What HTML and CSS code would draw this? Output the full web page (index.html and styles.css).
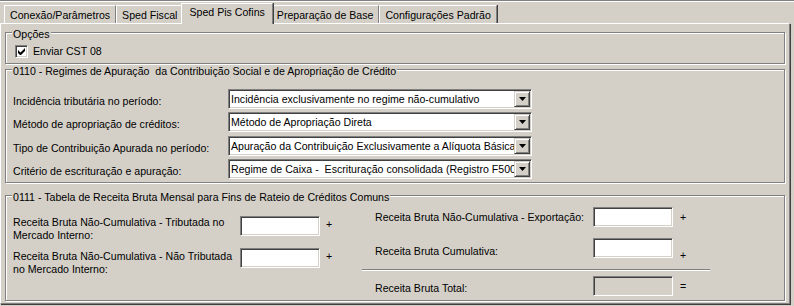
FILE: index.html
```html
<!DOCTYPE html>
<html lang="pt-br">
<head>
  <meta charset="UTF-8">
  <title>Sped Pis Cofins</title>
  <link rel="stylesheet" href="styles.css">
</head>
<body>
  <div class="window">
    <div class="tabs">
      <div class="tab">Conexão/Parâmetros</div>
      <div class="tab">Sped Fiscal</div>
      <div class="tab active">Sped Pis Cofins</div>
      <div class="tab">Preparação de Base</div>
      <div class="tab">Configurações Padrão</div>
    </div>
    <div class="page">
      <div class="group opcoes">
        <div class="caption">Opções</div>
        <label class="check-row">
          <span class="check">
            <svg width="7" height="7" viewBox="0 0 7 7"><path d="M0 2L2.5 4.5L7 0V3L2.5 7.5L0 5Z" fill="#000"/></svg>
          </span>
          Enviar CST 08
        </label>
      </div>

      <div class="group regimes">
        <div class="caption">0110 - Regimes de Apuração&nbsp; da Contribuição Social e de Apropriação de Crédito</div>
        <div class="combos">
          <div class="field-label">Incidência tributária no período:</div>
          <div class="combo"><span class="combo-text">Incidência exclusivamente no regime não-cumulativo</span><span class="combo-btn"><svg width="7" height="4" viewBox="0 0 7 4"><path d="M0 0H7L3.5 4Z" fill="#000"/></svg></span></div>
          <div class="field-label">Método de apropriação de créditos:</div>
          <div class="combo"><span class="combo-text">Método de Apropriação Direta</span><span class="combo-btn"><svg width="7" height="4" viewBox="0 0 7 4"><path d="M0 0H7L3.5 4Z" fill="#000"/></svg></span></div>
          <div class="field-label">Tipo de Contribuição Apurada no período:</div>
          <div class="combo"><span class="combo-text">Apuração da Contribuição Exclusivamente a Alíquota Básica</span><span class="combo-btn"><svg width="7" height="4" viewBox="0 0 7 4"><path d="M0 0H7L3.5 4Z" fill="#000"/></svg></span></div>
          <div class="field-label">Critério de escrituração e apuração:</div>
          <div class="combo"><span class="combo-text">Regime de Caixa -&nbsp; Escrituração consolidada (Registro F500)</span><span class="combo-btn"><svg width="7" height="4" viewBox="0 0 7 4"><path d="M0 0H7L3.5 4Z" fill="#000"/></svg></span></div>
        </div>
      </div>

      <div class="group receita">
        <div class="caption">0111 - Tabela de Receita Bruta Mensal para Fins de Rateio de Créditos Comuns</div>
        <div class="rb-cols">
          <div class="rb-left">
            <div class="rb-row">
              <div class="rb-label">Receita Bruta Não-Cumulativa - Tributada no Mercado Interno:</div>
              <div class="tb"></div>
              <div class="op pad2">+</div>
            </div>
            <div class="rb-row">
              <div class="rb-label pad2">Receita Bruta Não-Cumulativa - Não Tributada no Mercado Interno:</div>
              <div class="tb"></div>
              <div class="op pad2">+</div>
            </div>
          </div>
          <div class="rb-right">
            <div class="rb-row">
              <div class="rb-label pad4">Receita Bruta Não-Cumulativa - Exportação:</div>
              <div class="tb"></div>
              <div class="op pad4">+</div>
            </div>
            <div class="rb-row second">
              <div class="rb-label pad7">Receita Bruta Cumulativa:</div>
              <div class="tb"></div>
              <div class="op pad11">+</div>
            </div>
            <div class="separator"></div>
            <div class="rb-row total">
              <div class="rb-label pad6">Receita Bruta Total:</div>
              <div class="tb disabled"></div>
              <div class="op pad4">=</div>
            </div>
          </div>
        </div>
      </div>
    </div>
  </div>
</body>
</html>
```

FILE: styles.css
```css
body {
  margin: 0;
  background-color: #d4d0c8;
  font-family: "Liberation Sans", Arial, sans-serif;
  font-size: 10.6px;
  line-height: 13px;
  color: #000;
}
.window {
  width: 794px;
  height: 306px;
  box-sizing: border-box;
  border-top: 1px solid #808080;
  box-shadow: inset 0 1px 0 #fff;
  overflow: hidden;
}

/* abas */
.tabs {
  display: flex;
  align-items: flex-end;
  height: 20px;
  margin-top: 2px;
  padding-left: 4px;
}
.tab {
  height: 18px;
  box-sizing: border-box;
  padding: 3px 5px 0;
  border-top: 1px solid #fff;
  border-left: 1px solid #fff;
  border-right: 1px solid #808080;
  box-shadow: 1px 0 0 #404040;
  white-space: nowrap;
}
.tab.active {
  height: 21px;
  margin: 0 -2px -1px;
  padding: 2px 7px 0;
  position: relative;
  z-index: 1;
  background-color: #d4d0c8;
}
.page {
  box-sizing: border-box;
  width: 790px;
  height: 281px;
  border-top: 1px solid #fff;
  border-left: 1px solid #fff;
  border-right: 1px solid #808080;
  border-bottom: 1px solid #808080;
  box-shadow: 1px 1px 0 #404040;
  padding: 8px 4px 0;
}

/* group box */
.group {
  box-sizing: border-box;
  border: 1px solid #808080;
  box-shadow: inset 1px 1px 0 #fff, 1px 1px 0 #fff;
  padding: 0 7px;
}
.caption {
  display: table;
  margin: -5px 0 0 -1px;
  padding: 0 1px;
  background-color: #d4d0c8;
  white-space: nowrap;
}
.opcoes {
  height: 32px;
}
.regimes {
  height: 114px;
  margin-top: 5px;
}
.receita {
  height: 106px;
  margin-top: 12px;
}

.check-row {
  display: flex;
  align-items: center;
  margin-top: 4px;
  padding-left: 2px;
}
.check {
  width: 13px;
  height: 13px;
  box-sizing: border-box;
  border: 1px solid;
  border-color: #808080 #fff #fff #808080;
  box-shadow: inset 1px 1px 0 #404040, inset -1px -1px 0 #d4d0c8;
  background-color: #fff;
  margin-right: 5px;
  display: flex;
  align-items: center;
  justify-content: center;
}
.check svg {
  display: block;
}

/* combos */
.combos {
  display: grid;
  grid-template-columns: 215px 304px;
  grid-auto-rows: 20px;
  row-gap: 3.33px;
  margin-top: 11px;
}
.field-label {
  padding-top: 6px;
  white-space: nowrap;
}
.combo {
  display: flex;
  box-sizing: border-box;
  border: 1px solid;
  border-color: #808080 #fff #fff #808080;
  box-shadow: inset 1px 1px 0 #404040, inset -1px -1px 0 #d4d0c8;
  background-color: #fff;
  padding: 1px;
}
.combo-text {
  flex: 1;
  padding-left: 1px;
  overflow: hidden;
  white-space: nowrap;
  line-height: 16px;
}
.combo-btn {
  flex: none;
  width: 16px;
  box-sizing: border-box;
  border: 1px solid;
  border-color: #d4d0c8 #404040 #404040 #d4d0c8;
  box-shadow: inset 1px 1px 0 #fff, inset -1px -1px 0 #808080;
  background-color: #d4d0c8;
  display: flex;
  align-items: center;
  justify-content: center;
}
.combo-btn svg {
  display: block;
}

/* receita bruta */
.rb-cols {
  display: flex;
}
.rb-left {
  width: 349px;
  padding-top: 12px;
}
.rb-right {
  width: 348px;
  padding-top: 3px;
}
.rb-row {
  display: flex;
  align-items: flex-start;
}
.rb-left .rb-row {
  height: 32px;
}
.rb-left .rb-label {
  width: 227px;
}
.rb-right .rb-row {
  height: 20px;
}
.rb-right .rb-label {
  width: 218px;
  padding-left: 13px;
  white-space: nowrap;
}
.rb-row.second {
  margin-top: 11px;
}
.rb-row.total {
  margin-top: 5px;
}
.separator {
  margin-top: 11px;
  border-top: 1px solid #808080;
  border-bottom: 1px solid #fff;
}
.tb {
  flex: none;
  width: 80px;
  height: 20px;
  box-sizing: border-box;
  border: 1px solid;
  border-color: #808080 #fff #fff #808080;
  box-shadow: inset 1px 1px 0 #404040, inset -1px -1px 0 #d4d0c8;
  background-color: #fff;
}
.tb.disabled {
  background-color: #d4d0c8;
}
.op {
  margin-left: 6px;
}
.rb-right .op {
  margin-left: 7px;
}
.pad2 { padding-top: 2px; }
.pad4 { padding-top: 4px; }
.pad6 { padding-top: 6px; }
.pad7 { padding-top: 7px; }
.pad11 { padding-top: 11px; }
```
